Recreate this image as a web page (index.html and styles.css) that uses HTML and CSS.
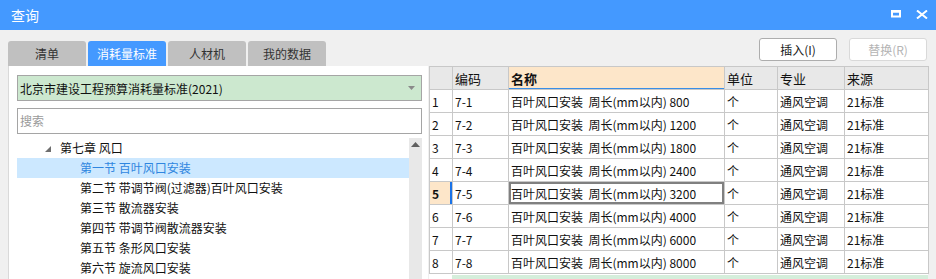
FILE: index.html
```html
<!DOCTYPE html>
<html lang="zh-CN">
<head>
<meta charset="utf-8">
<title>查询</title>
<link rel="stylesheet" href="styles.css">
</head>
<body>
<div class="window">
  <div class="titlebar">
    <span class="title">查询</span>
    <div class="winctl">
      <svg class="ic-max" width="10" height="8" viewBox="0 0 10 8"><rect x="1" y="1.5" width="8" height="5" fill="none" stroke="#fff" stroke-width="2"/><rect x="0" y="0" width="10" height="2.5" fill="#fff"/></svg>
      <svg class="ic-close" width="12" height="9" viewBox="0 0 12 9"><path d="M1 0.5L11 8.5M11 0.5L1 8.5" stroke="#fff" stroke-width="2"/></svg>
    </div>
  </div>
  <div class="toolbar">
    <div class="tabs">
      <div class="tab">清单</div>
      <div class="tab active">消耗量标准</div>
      <div class="tab">人材机</div>
      <div class="tab">我的数据</div>
    </div>
    <div class="actions">
      <button class="btn">插入(I)</button>
      <button class="btn disabled">替换(R)</button>
    </div>
  </div>
  <div class="main">
    <div class="left">
      <div class="select">
        <span>北京市建设工程预算消耗量标准(2021)</span>
        <svg class="caret" width="7" height="4" viewBox="0 0 7 4"><path d="M0 0H7L3.5 4Z" fill="#8a8a8a"/></svg>
      </div>
      <div class="search">搜索</div>
      <div class="tree">
        <div class="tree-list">
          <div class="node chapter"><svg class="tri" width="6" height="6" viewBox="0 0 6 6"><path d="M6 0V6H0Z" fill="#6e6e6e"/></svg><span>第七章 风口</span></div>
          <div class="node leaf active">第一节 百叶风口安装</div>
          <div class="node leaf">第二节 带调节阀(过滤器)百叶风口安装</div>
          <div class="node leaf">第三节 散流器安装</div>
          <div class="node leaf">第四节 带调节阀散流器安装</div>
          <div class="node leaf">第五节 条形风口安装</div>
          <div class="node leaf">第六节 旋流风口安装</div>
        </div>
        <div class="scrollbar">
          <svg class="sb-up" width="9" height="5" viewBox="0 0 9 5"><path d="M0 5L4.5 0L9 5Z" fill="#606060"/></svg>
        </div>
      </div>
    </div>
    <div class="right">
      <table class="grid">
        <colgroup>
          <col class="c-no"><col class="c-code"><col class="c-name"><col class="c-unit"><col class="c-spec"><col class="c-src">
        </colgroup>
        <thead>
          <tr>
            <th class="corner"></th>
            <th>编码</th>
            <th class="sorted">名称</th>
            <th>单位</th>
            <th>专业</th>
            <th>来源</th>
          </tr>
        </thead>
        <tbody>
          <tr><td class="no">1</td><td>7-1</td><td class="name">百叶风口安装  周长(mm以内) 800</td><td>个</td><td>通风空调</td><td>21标准</td></tr>
          <tr><td class="no">2</td><td>7-2</td><td class="name">百叶风口安装  周长(mm以内) 1200</td><td>个</td><td>通风空调</td><td>21标准</td></tr>
          <tr><td class="no">3</td><td>7-3</td><td class="name">百叶风口安装  周长(mm以内) 1800</td><td>个</td><td>通风空调</td><td>21标准</td></tr>
          <tr><td class="no">4</td><td>7-4</td><td class="name">百叶风口安装  周长(mm以内) 2400</td><td>个</td><td>通风空调</td><td>21标准</td></tr>
          <tr class="current"><td class="no">5</td><td>7-5</td><td class="name focus">百叶风口安装  周长(mm以内) 3200</td><td>个</td><td>通风空调</td><td>21标准</td></tr>
          <tr><td class="no">6</td><td>7-6</td><td class="name">百叶风口安装  周长(mm以内) 4000</td><td>个</td><td>通风空调</td><td>21标准</td></tr>
          <tr><td class="no">7</td><td>7-7</td><td class="name">百叶风口安装  周长(mm以内) 6000</td><td>个</td><td>通风空调</td><td>21标准</td></tr>
          <tr><td class="no">8</td><td>7-8</td><td class="name">百叶风口安装  周长(mm以内) 8000</td><td>个</td><td>通风空调</td><td>21标准</td></tr>
        </tbody>
      </table>
      <div class="filler"><div class="newrow"></div></div>
    </div>
  </div>
</div>
</body>
</html>
```

FILE: styles.css
```css
* { box-sizing: border-box; }
html, body { margin: 0; padding: 0; }
body {
  width: 936px;
  height: 279px;
  overflow: hidden;
  background: #f0f0f0;
  font-family: "Noto Sans CJK SC", "Noto Sans", sans-serif;
  font-size: 12px;
  color: #1a1a1a;
}
.window { display: flex; flex-direction: column; height: 279px; }

.titlebar {
  height: 30px;
  background: #4499ff;
  display: flex;
  align-items: center;
  justify-content: space-between;
  padding: 0 8px 0 11px;
  flex: none;
}
.title { color: #fff; font-size: 14px; line-height: 30px; }
.winctl { display: flex; align-items: center; gap: 15px; padding-bottom: 2px; }
.ic-max, .ic-close { display: block; }

.toolbar {
  height: 36px;
  flex: none;
  display: flex;
  justify-content: space-between;
}
.tabs { display: flex; gap: 2px; align-self: flex-end; margin-left: 8px; }
.tab {
  width: 78px;
  height: 25px;
  background: #c0c0c0;
  border-radius: 3px 3px 0 0;
  text-align: center;
  line-height: 25px;
  color: #333;
}
.tab.active { background: #4499ff; color: #fff; }
.actions { display: flex; gap: 12px; padding-top: 8px; margin-right: 9px; }
.btn {
  width: 78px;
  height: 23px;
  background: #fff;
  border: 1px solid #adadad;
  border-radius: 3px;
  font-family: inherit;
  font-size: 12px;
  color: #1a1a1a;
  padding: 0;
}
.btn.disabled { border-color: #d9d9d9; color: #b4b4b4; }

.main { flex: 1; display: flex; min-height: 0; }
.left {
  width: 420px;
  margin-left: 8px;
  background: #fff;
  border-left: 1px solid #d9d9d9;
  padding: 9px 6px 0 8px;
  display: flex;
  flex-direction: column;
}
.select {
  height: 26px;
  background: #cce8cf;
  border: 1px solid #a5a5a5;
  display: flex;
  align-items: center;
  justify-content: space-between;
  padding: 0 6px 0 2px;
  color: #111;
  font-size: 12px;
}
.caret { display: block; }
.search {
  margin-top: 7px;
  height: 26px;
  border: 1px solid #a5a5a5;
  padding-left: 2px;
  line-height: 24px;
  color: #9a9a9a;
}
.tree { margin-top: 4px; flex: 1; display: flex; min-height: 0; }
.tree-list { flex: 1; }
.node { height: 20px; line-height: 20px; white-space: nowrap; color: #111; }
.chapter { display: flex; align-items: center; padding-left: 28px; }
.chapter .tri { margin-right: 9px; margin-top: 2px; }
.leaf { padding-left: 63px; }
.leaf.active { background: #cce8ff; color: #2f86e0; }
.scrollbar { width: 13px; background: #e8e8e8; display: flex; justify-content: center; padding-top: 4px; }
.sb-up { display: block; }

.right {
  width: 499px;
  margin-left: 1px;
  background: #fff;
  display: flex;
  flex-direction: column;
}
.grid {
  border-collapse: collapse;
  table-layout: fixed;
  width: 499px;
  font-size: 12px;
}
.c-no { width: 23px; }
.c-code { width: 56px; }
.c-name { width: 216px; }
.c-unit { width: 53px; }
.c-spec { width: 67px; }
.c-src { width: 84px; }
.grid th, .grid td {
  border: 1px solid #c8c8c8;
  height: 23px;
  padding: 0 0 0 2px;
  text-align: left;
  white-space: pre;
  overflow: hidden;
  font-weight: normal;
  color: #111;
}
.grid th { background: #e8e8e8; font-size: 13px; }
.grid th.sorted { background: #fde6c9; font-weight: bold; box-shadow: inset 0 -1px 0 #3a8ee6; }
.grid td.no { padding-left: 2px; }
.grid tr.current td.no { background: #fde6c9; font-weight: bold; box-shadow: inset -2px 0 0 #1a73e8; }
.grid td.focus { box-shadow: inset 0 0 0 2px #808080; }
.filler { flex: 1; padding-top: 1px; display: flex; }
.newrow { margin-left: 23px; flex: 1; background: #d5eedb; }
```
